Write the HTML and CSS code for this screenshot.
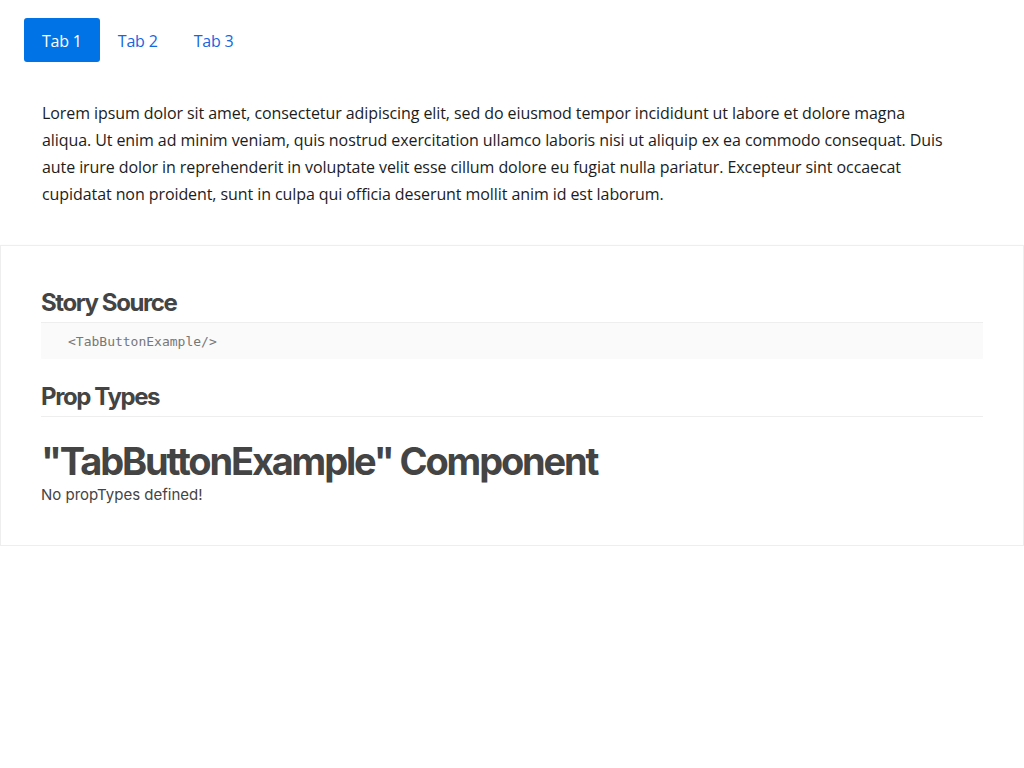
FILE: index.html
```html
<!DOCTYPE html>
<html>
<head>
<meta charset="utf-8">
<link rel="stylesheet" href="styles.css">
</head>
<body>
<div class="story">
  <div class="tabs">
    <button class="tab active">Tab 1</button>
    <button class="tab">Tab 2</button>
    <button class="tab">Tab 3</button>
  </div>
  <p class="lorem">Lorem ipsum dolor sit amet, consectetur adipiscing elit, sed do eiusmod tempor incididunt ut labore et dolore magna<br>aliqua. Ut enim ad minim veniam, quis nostrud exercitation ullamco laboris nisi ut aliquip ex ea commodo consequat. Duis<br>aute irure dolor in reprehenderit in voluptate velit esse cillum dolore eu fugiat nulla pariatur. Excepteur sint occaecat<br>cupidatat non proident, sunt in culpa qui officia deserunt mollit anim id est laborum.</p>
</div>
<div class="info">
  <h2 class="section-title">Story Source</h2>
  <pre class="source">&lt;TabButtonExample/&gt;</pre>
  <h2 class="section-title">Prop Types</h2>
  <h1 class="comp-title">"TabButtonExample" Component</h1>
  <p class="no-props">No propTypes defined!</p>
</div>
</body>
</html>
```
FILE: styles.css
```css
html, body { margin: 0; padding: 0; background: #fff; }
body { font-family: "Open Sans", sans-serif; }
.story { padding: 18px 24px 0 24px; }
.tabs { display: flex; gap: 0; }
.tab {
  font-family: "Open Sans", sans-serif;
  font-size: 16px;
  border: none;
  background: transparent;
  color: #1766e0;
  height: 44px;
  padding: 1px 18px 0 18px;
  border-radius: 3px;
  cursor: pointer;
  letter-spacing: -0.2px;
}
.tab.active { background: #0073e6; color: #fff; }
.lorem {
  margin: 38px 0 0 18px;
  width: 960px;
  font-size: 16px;
  line-height: 27px;
  color: #1c1c1c;
  letter-spacing: -0.08px;
  white-space: nowrap;
}
.info {
  margin-top: 37px;
  border: 1px solid #eee;
  box-shadow: 0 1px 3px rgba(0,0,0,0.06);
  padding: 42px 40px 41px 40px;
  font-family: Inter, "Noto Sans", sans-serif;
  color: #444;
}
.section-title {
  margin: 0;
  font-size: 24px;
  font-weight: 700;
  letter-spacing: -1.4px;
  padding-bottom: 4px;
  border-bottom: 1px solid #eee;
  line-height: 30px;
}
.source {
  margin: 0;
  background: #fafafa;
  padding: 11px 27px 9px 27px;
  font-family: "DejaVu Sans Mono", monospace;
  font-size: 13px;
  line-height: 16px;
  color: #777;
}
.source + .section-title { margin-top: 23px; }
.comp-title {
  margin: 21px 0 0 0;
  font-size: 38px;
  font-weight: 700;
  letter-spacing: -2.15px;
  line-height: 46px;
}
.no-props { margin: 2px 0 0 0; font-size: 15px; line-height: 18px; }
```
